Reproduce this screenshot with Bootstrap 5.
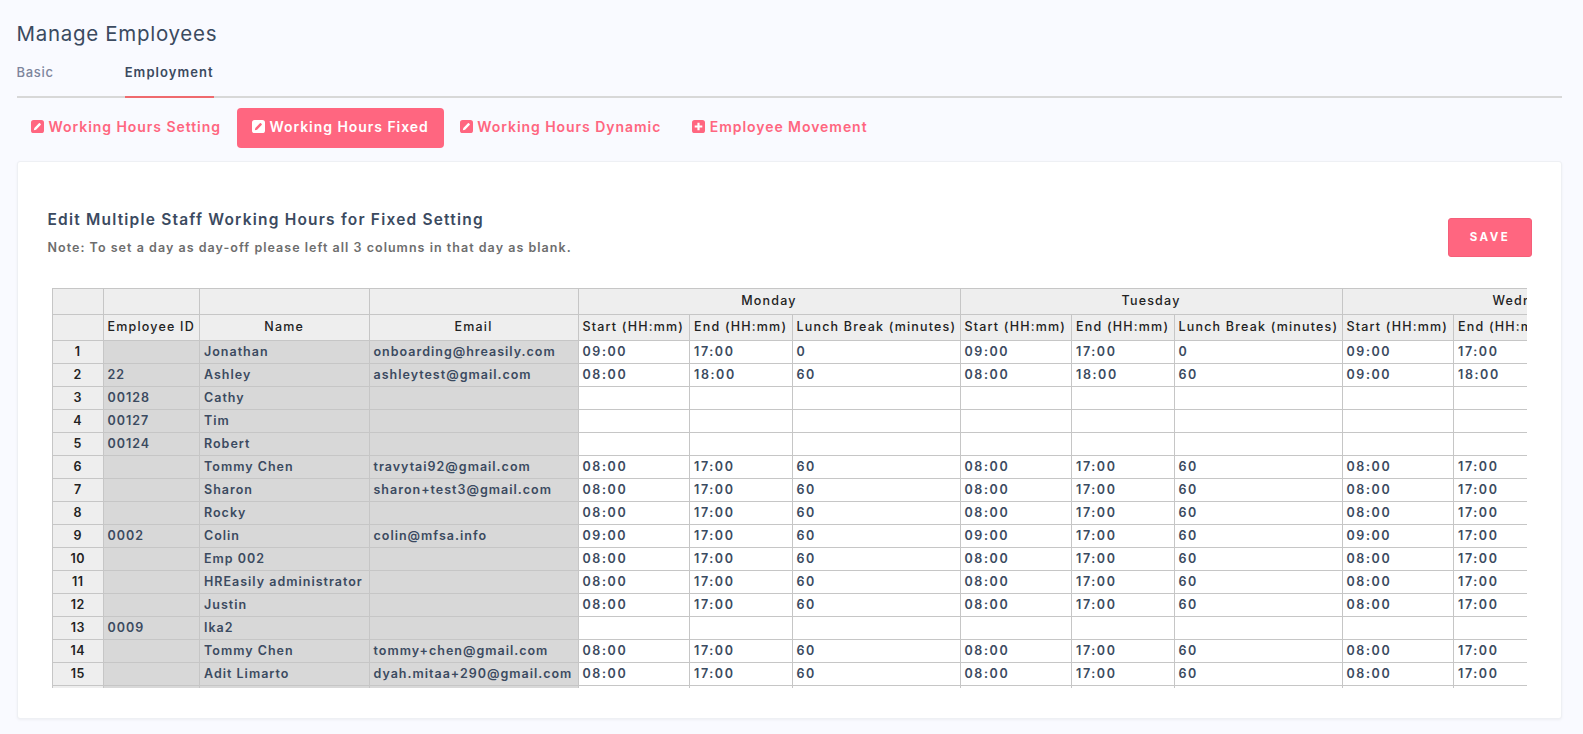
<!DOCTYPE html>
<html lang="en">
<head>
<meta charset="utf-8">
<title>Manage Employees</title>
<link href="https://cdn.jsdelivr.net/npm/bootstrap@5.3.0/dist/css/bootstrap.min.css" rel="stylesheet">
<style>
html,body{height:734px;overflow:hidden}
body{background:#f9faff;font-family:Inter,"Liberation Sans",sans-serif;color:#3b4a60;font-size:13px}
.page-wrap{padding:21px 21px 0 16.5px}
.page-title{font-size:20.5px;font-weight:400;line-height:26px;letter-spacing:.7px;margin:0 0 17px;color:#3b4a60}
.main-tabs{border-bottom:2px solid #d8d8d8;gap:71px}
.main-tabs .nav-link{padding:0 0 15px;margin-bottom:-2px;border:0;border-bottom:2px solid transparent;border-radius:0;background:none;color:#7d859c;font-size:13px;line-height:17px;letter-spacing:.7px;font-weight:500}
.main-tabs .nav-link.active{color:#3b4a60;font-weight:600;letter-spacing:1.05px;border-bottom-color:#ef6a6e;background:none}
.sub-tabs{margin:10px 0 13px;gap:0}
.sub-tabs .nav-link{display:flex;align-items:center;gap:4.5px;height:40px;padding:0 15px 3px 14.5px;color:#ff6680;font-size:14px;font-weight:600;letter-spacing:.95px;border-radius:4px;margin-right:1.5px}
.sub-tabs .nav-link.active{background:#ff6680;color:#fff}
.tab-ico{width:13px;height:13px;flex:none;display:block}
.panel{height:558px;border:1px solid #eef0f4;border-radius:3px;box-shadow:0 1px 3px rgba(0,0,0,.05);background:#fff;padding:48px 29px 0 30px}
.panel-title{font-size:15.5px;font-weight:600;line-height:20px;letter-spacing:1.2px;color:#3b4a60;margin:0 0 10px}
.panel-note{font-size:12.5px;font-weight:600;line-height:16px;letter-spacing:1.03px;color:#6d6d6d;margin:0}
.save-btn{background:#ff6680;border:1px solid #f55f79;color:#fff;width:84px;height:39px;padding:0;font-size:11.5px;font-weight:700;letter-spacing:2.5px;border-radius:3px;margin-top:8px}
.save-btn:hover{background:#ff6680;color:#fff;border-color:#f55f79}
.grid-clip{overflow:hidden;width:1474.5px;height:400px;margin:31px 0 0 4.5px}
.hours-grid{table-layout:fixed;border-collapse:collapse;width:1671.5px;font-size:12.5px;letter-spacing:1px;font-weight:600;color:#3b4a60}
.hours-grid td,.hours-grid th{border:1px solid #c6c6c6;padding:0 4px 2px;height:23px;line-height:19px;white-space:nowrap;overflow:hidden}
.hours-grid th{background:#eeeeee;color:#222;font-weight:500;letter-spacing:1.2px;text-align:center;height:26px}
.hours-grid th.lft{text-align:left}
.hours-grid tbody th{height:23px;font-weight:600;letter-spacing:.5px}
.hours-grid td.ro{background:#d8d8d8}
.hours-grid td:nth-child(n+5){letter-spacing:1.6px}
.w1{width:50.5px}.w2{width:96.5px}.w3{width:169.5px}.w4{width:209px}.w5{width:111.5px}.w6{width:102.5px}.w7{width:168px}
</style>
</head>
<body>
<svg width="0" height="0" class="position-absolute">
<symbol id="ico-edit" viewBox="0 0 12 12"><rect width="12" height="12" rx="2.4" fill="currentColor"/><path d="M2.6 9.4l.5-2.1 4.2-4.2a.7.7 0 0 1 1 0l.6.6a.7.7 0 0 1 0 1L4.7 8.9z" fill="var(--ico-in)"/></symbol>
<symbol id="ico-plus" viewBox="0 0 12 12"><rect width="12" height="12" rx="2.4" fill="currentColor"/><path d="M5 2.5h2V5h2.5v2H7v2.5H5V7H2.5V5H5z" fill="#fff"/></symbol>
</svg>
<div class="page-wrap">
  <h1 class="page-title">Manage Employees</h1>
  <ul class="nav main-tabs">
    <li class="nav-item"><a class="nav-link" href="#">Basic</a></li>
    <li class="nav-item"><a class="nav-link active" href="#">Employment</a></li>
  </ul>
  <ul class="nav nav-pills sub-tabs">
    <li class="nav-item"><a class="nav-link" href="#" style="--ico-in:#fff"><svg class="tab-ico"><use href="#ico-edit"/></svg>Working Hours Setting</a></li>
    <li class="nav-item"><a class="nav-link active" href="#" style="--ico-in:#ff6680"><svg class="tab-ico"><use href="#ico-edit"/></svg>Working Hours Fixed</a></li>
    <li class="nav-item"><a class="nav-link" href="#" style="--ico-in:#fff"><svg class="tab-ico"><use href="#ico-edit"/></svg>Working Hours Dynamic</a></li>
    <li class="nav-item"><a class="nav-link" href="#"><svg class="tab-ico"><use href="#ico-plus"/></svg>Employee Movement</a></li>
  </ul>
  <div class="card panel">
    <div class="d-flex justify-content-between align-items-start">
      <div>
        <h2 class="panel-title">Edit Multiple Staff Working Hours for Fixed Setting</h2>
        <p class="panel-note">Note: To set a day as day-off please left all 3 columns in that day as blank.</p>
      </div>
      <button type="button" class="btn save-btn">SAVE</button>
    </div>
    <div class="grid-clip">
      <table class="hours-grid">
        <colgroup>
          <col class="w1"><col class="w2"><col class="w3"><col class="w4">
          <col class="w5"><col class="w6"><col class="w7">
          <col class="w5"><col class="w6"><col class="w7">
          <col class="w5"><col class="w6"><col class="w7">
        </colgroup>
        <thead>
          <tr><th></th><th></th><th></th><th></th><th colspan="3">Monday</th><th colspan="3">Tuesday</th><th colspan="3">Wednesday</th></tr>
          <tr><th></th><th class="lft">Employee ID</th><th>Name</th><th>Email</th>
            <th class="lft">Start (HH:mm)</th><th class="lft">End (HH:mm)</th><th class="lft">Lunch Break (minutes)</th>
            <th class="lft">Start (HH:mm)</th><th class="lft">End (HH:mm)</th><th class="lft">Lunch Break (minutes)</th>
            <th class="lft">Start (HH:mm)</th><th class="lft">End (HH:mm)</th><th class="lft">Lunch Break (minutes)</th></tr>
        </thead>
        <tbody>
          <tr><th>1</th><td class="ro"></td><td class="ro">Jonathan</td><td class="ro">onboarding@hreasily.com</td><td>09:00</td><td>17:00</td><td>0</td><td>09:00</td><td>17:00</td><td>0</td><td>09:00</td><td>17:00</td><td>0</td></tr>
          <tr><th>2</th><td class="ro">22</td><td class="ro">Ashley</td><td class="ro">ashleytest@gmail.com</td><td>08:00</td><td>18:00</td><td>60</td><td>08:00</td><td>18:00</td><td>60</td><td>09:00</td><td>18:00</td><td>60</td></tr>
          <tr><th>3</th><td class="ro">00128</td><td class="ro">Cathy</td><td class="ro"></td><td></td><td></td><td></td><td></td><td></td><td></td><td></td><td></td><td></td></tr>
          <tr><th>4</th><td class="ro">00127</td><td class="ro">Tim</td><td class="ro"></td><td></td><td></td><td></td><td></td><td></td><td></td><td></td><td></td><td></td></tr>
          <tr><th>5</th><td class="ro">00124</td><td class="ro">Robert</td><td class="ro"></td><td></td><td></td><td></td><td></td><td></td><td></td><td></td><td></td><td></td></tr>
          <tr><th>6</th><td class="ro"></td><td class="ro">Tommy Chen</td><td class="ro">travytai92@gmail.com</td><td>08:00</td><td>17:00</td><td>60</td><td>08:00</td><td>17:00</td><td>60</td><td>08:00</td><td>17:00</td><td>60</td></tr>
          <tr><th>7</th><td class="ro"></td><td class="ro">Sharon</td><td class="ro">sharon+test3@gmail.com</td><td>08:00</td><td>17:00</td><td>60</td><td>08:00</td><td>17:00</td><td>60</td><td>08:00</td><td>17:00</td><td>60</td></tr>
          <tr><th>8</th><td class="ro"></td><td class="ro">Rocky</td><td class="ro"></td><td>08:00</td><td>17:00</td><td>60</td><td>08:00</td><td>17:00</td><td>60</td><td>08:00</td><td>17:00</td><td>60</td></tr>
          <tr><th>9</th><td class="ro">0002</td><td class="ro">Colin</td><td class="ro">colin@mfsa.info</td><td>09:00</td><td>17:00</td><td>60</td><td>09:00</td><td>17:00</td><td>60</td><td>09:00</td><td>17:00</td><td>60</td></tr>
          <tr><th>10</th><td class="ro"></td><td class="ro">Emp 002</td><td class="ro"></td><td>08:00</td><td>17:00</td><td>60</td><td>08:00</td><td>17:00</td><td>60</td><td>08:00</td><td>17:00</td><td>60</td></tr>
          <tr><th>11</th><td class="ro"></td><td class="ro">HREasily administrator</td><td class="ro"></td><td>08:00</td><td>17:00</td><td>60</td><td>08:00</td><td>17:00</td><td>60</td><td>08:00</td><td>17:00</td><td>60</td></tr>
          <tr><th>12</th><td class="ro"></td><td class="ro">Justin</td><td class="ro"></td><td>08:00</td><td>17:00</td><td>60</td><td>08:00</td><td>17:00</td><td>60</td><td>08:00</td><td>17:00</td><td>60</td></tr>
          <tr><th>13</th><td class="ro">0009</td><td class="ro">Ika2</td><td class="ro"></td><td></td><td></td><td></td><td></td><td></td><td></td><td></td><td></td><td></td></tr>
          <tr><th>14</th><td class="ro"></td><td class="ro">Tommy Chen</td><td class="ro">tommy+chen@gmail.com</td><td>08:00</td><td>17:00</td><td>60</td><td>08:00</td><td>17:00</td><td>60</td><td>08:00</td><td>17:00</td><td>60</td></tr>
          <tr><th>15</th><td class="ro"></td><td class="ro">Adit Limarto</td><td class="ro">dyah.mitaa+290@gmail.com</td><td>08:00</td><td>17:00</td><td>60</td><td>08:00</td><td>17:00</td><td>60</td><td>08:00</td><td>17:00</td><td>60</td></tr>
          <tr><th></th><td class="ro"></td><td class="ro"></td><td class="ro"></td><td></td><td></td><td></td><td></td><td></td><td></td><td></td><td></td><td></td></tr>
        </tbody>
      </table>
    </div>
  </div>
</div>
<script src="https://cdn.jsdelivr.net/npm/bootstrap@5.3.0/dist/js/bootstrap.bundle.min.js"></script>
</body>
</html>
